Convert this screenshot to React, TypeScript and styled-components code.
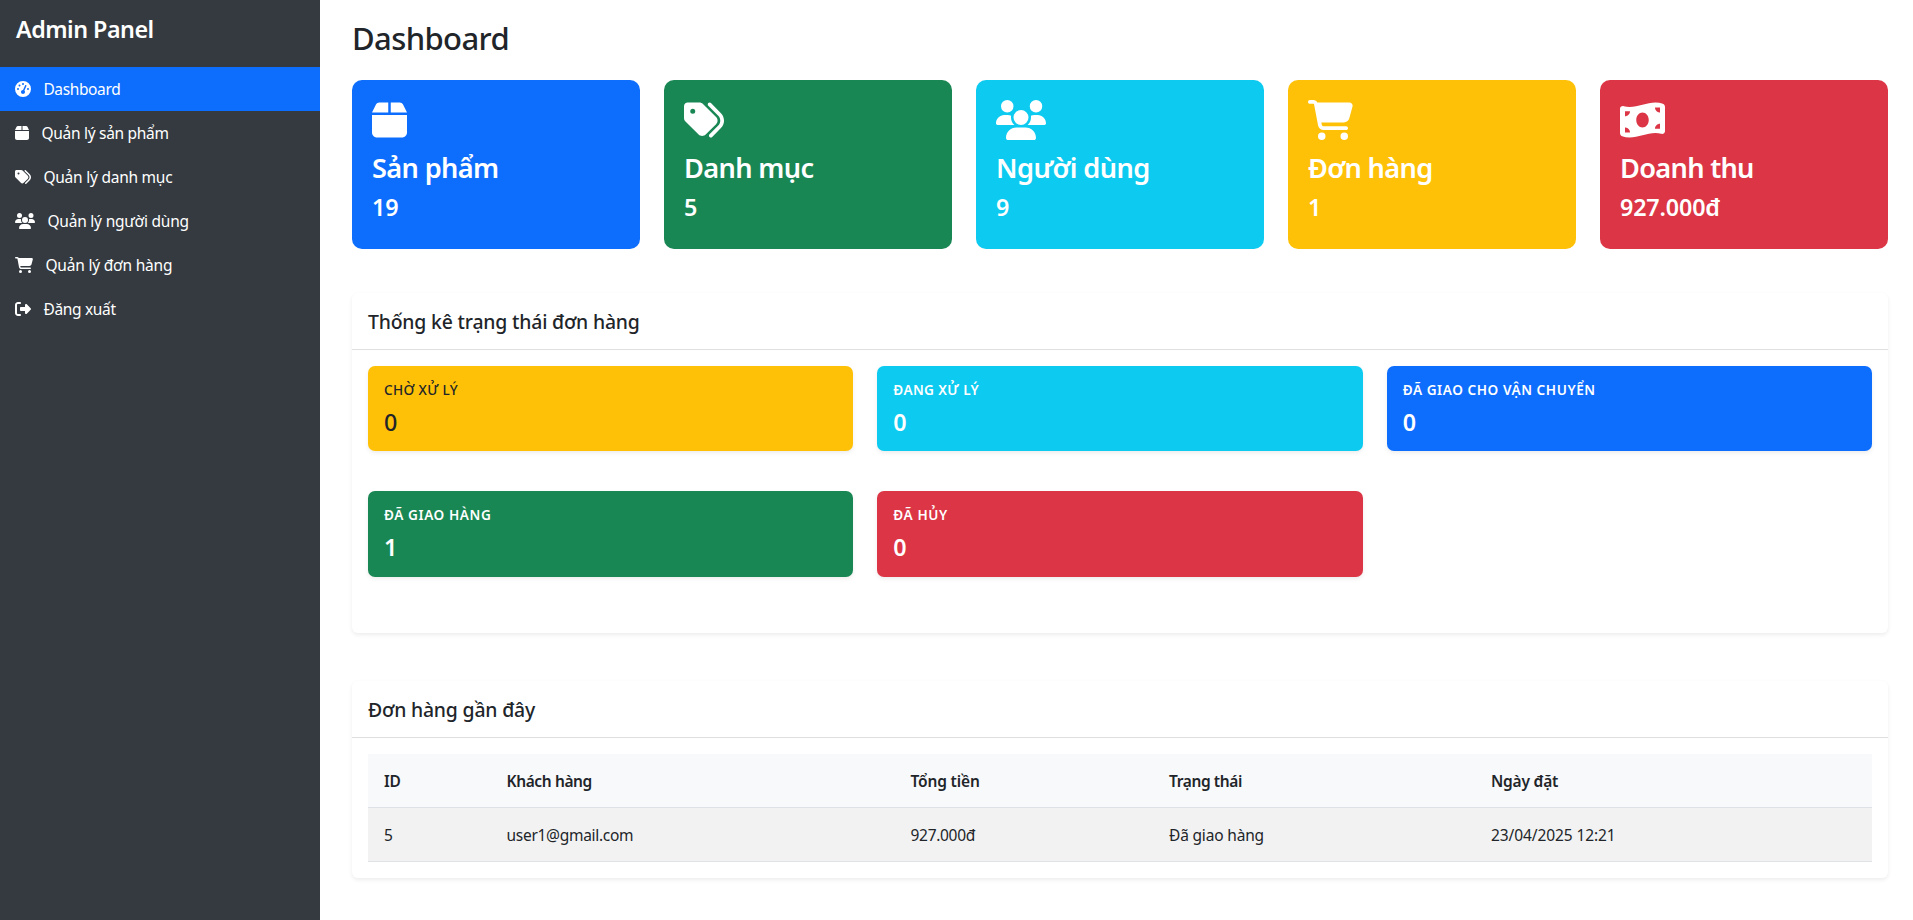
import React from 'react';
import styled, { createGlobalStyle } from 'styled-components';
import {
  FaBox,
  FaCartShopping,
  FaGaugeHigh,
  FaMoneyBillWave,
  FaRightFromBracket,
  FaTags,
  FaUsers,
} from 'react-icons/fa6';
import type { IconType } from 'react-icons';

const colors = {
  primary: '#0d6efd',
  success: '#198754',
  info: '#0dcaf0',
  warning: '#ffc107',
  danger: '#dc3545',
  dark: '#343a40',
  text: '#212529',
};

const GlobalStyle = createGlobalStyle`
  * { box-sizing: border-box; }
  body {
    margin: 0;
    background: #fff;
    color: ${colors.text};
    font-family: 'Segoe UI', 'Noto Sans', 'Open Sans', sans-serif;
    font-size: 15.5px;
    line-height: 24px;
  }
  h1, h2, h3, h4, p { margin: 0; }
`;

type Tracked = { $track?: number };

const Layout = styled.div`
  display: flex;
  min-height: 100vh;
`;

const Sidebar = styled.aside`
  flex: 0 0 320px;
  background: ${colors.dark};
  color: #fff;
`;

const Brand = styled.h2`
  height: 67px;
  padding: 15px 16px 0;
  font-size: 23.3px;
  font-weight: 600;
  line-height: 28px;
  letter-spacing: -0.5px;
`;

/* Glyphs share one height; their width follows the em ratio of the drawing. */
const Glyph = styled.span<{ $size: number; $ratio: number }>`
  display: block;
  flex: none;
  width: ${({ $size, $ratio }) => $size * $ratio}px;
  height: ${({ $size }) => $size}px;

  svg {
    display: block;
    width: 100%;
    height: 100%;
  }
`;

const NavLink = styled.a<{ $active?: boolean }>`
  display: flex;
  align-items: center;
  gap: 12.4px;
  height: 44px;
  padding: 0 15px;
  color: #fff;
  text-decoration: none;
  background: ${({ $active }) => ($active ? colors.primary : 'transparent')};
`;

const NavLabel = styled.span<Tracked>`
  letter-spacing: ${({ $track = 0 }) => $track}px;
`;

const Main = styled.main`
  flex: 1;
  padding: 19px 25px 0 32px;
`;

const PageTitle = styled.h1`
  margin-bottom: 23px;
  font-size: 31px;
  font-weight: 500;
  line-height: 38px;
  letter-spacing: -0.6px;
`;

const CardRow = styled.section`
  display: grid;
  grid-template-columns: repeat(5, 1fr);
  gap: 24px;
  margin-bottom: 44px;
`;

const StatCard = styled.article<{ $color: string }>`
  height: 169px;
  padding: 20px;
  border-radius: 10px;
  background: ${({ $color }) => $color};
  color: #fff;
`;

const StatTitle = styled.h3<Tracked>`
  margin: 11px 0 8px;
  font-size: 27.2px;
  font-weight: 600;
  line-height: 34px;
  letter-spacing: ${({ $track = 0 }) => $track}px;
`;

const StatValue = styled.p`
  font-size: 23.3px;
  font-weight: 600;
  line-height: 28px;
  letter-spacing: -0.15px;
`;

const Panel = styled.section`
  border-radius: 6px;
  background: #fff;
  box-shadow: 0 2px 4px rgba(0, 0, 0, 0.075);

  & + & {
    margin-top: 48px;
  }
`;

const PanelHeader = styled.header`
  height: 57px;
  padding: 17px 16px 15px;
  border-bottom: 1px solid #dfdfdf;
`;

const PanelTitle = styled.h4<Tracked>`
  font-size: 19.4px;
  font-weight: 550;
  line-height: 24px;
  letter-spacing: ${({ $track = 0 }) => $track}px;
`;

const PanelBody = styled.div`
  padding: 16px;
`;

const StatusGrid = styled.div`
  display: grid;
  grid-template-columns: repeat(3, 1fr);
  gap: 40px 24px;
  padding-bottom: 40px;
`;

const StatusTile = styled.article<{ $color: string; $dark?: boolean }>`
  height: 85.4px;
  padding: 16px;
  border-radius: 7px;
  background: ${({ $color }) => $color};
  color: ${({ $dark }) => ($dark ? colors.text : '#fff')};
  font-weight: ${({ $dark }) => ($dark ? 500 : 600)};
  box-shadow: 0 2px 4px rgba(0, 0, 0, 0.075);
`;

const StatusLabel = styled.p<Tracked>`
  margin-bottom: 9px;
  font-size: 13.6px;
  line-height: 16.8px;
  text-transform: uppercase;
  letter-spacing: ${({ $track = 0 }) => $track}px;
`;

const StatusValue = styled.p`
  font-size: 23.3px;
  line-height: 28.8px;
`;

const Table = styled.table`
  width: 100%;
  table-layout: fixed;
  border-collapse: separate;
  border-spacing: 0;
`;

const Column = styled.col<{ $width: number }>`
  width: ${({ $width }) => $width}px;
`;

const HeadCell = styled.th<Tracked>`
  height: 54px;
  padding: 2px 16px 0;
  border-bottom: 1px solid #dee2e6;
  background: #f8f9fb;
  font-weight: 600;
  text-align: left;
  letter-spacing: ${({ $track = 0 }) => $track}px;
`;

const Cell = styled.td<Tracked>`
  height: 54px;
  padding: 2px 16px 0;
  border-bottom: 1px solid #dee2e6;
  background: #f2f2f2;
  letter-spacing: ${({ $track = 0 }) => $track}px;
`;

type Symbol = { icon: IconType; ratio: number };

const symbols: Record<string, Symbol> = {
  gauge: { icon: FaGaugeHigh, ratio: 1 },
  box: { icon: FaBox, ratio: 0.875 },
  tags: { icon: FaTags, ratio: 1 },
  users: { icon: FaUsers, ratio: 1.25 },
  cart: { icon: FaCartShopping, ratio: 1.125 },
  money: { icon: FaMoneyBillWave, ratio: 1.125 },
  exit: { icon: FaRightFromBracket, ratio: 1 },
};

function SymbolIcon({ name, size }: { name: string; size: number }) {
  const { icon: Icon, ratio } = symbols[name];
  return (
    <Glyph $size={size} $ratio={ratio}>
      <Icon />
    </Glyph>
  );
}

const navItems: { icon: string; label: string; track: number; active?: boolean }[] = [
  { icon: 'gauge', label: 'Dashboard', track: -0.37, active: true },
  { icon: 'box', label: 'Quản lý sản phẩm', track: -0.29 },
  { icon: 'tags', label: 'Quản lý danh mục', track: -0.24 },
  { icon: 'users', label: 'Quản lý người dùng', track: -0.21 },
  { icon: 'cart', label: 'Quản lý đơn hàng', track: -0.2 },
  { icon: 'exit', label: 'Đăng xuất', track: -0.33 },
];

const stats = [
  { icon: 'box', title: 'Sản phẩm', value: '19', color: colors.primary, track: -0.65 },
  { icon: 'tags', title: 'Danh mục', value: '5', color: colors.success, track: -0.65 },
  { icon: 'users', title: 'Người dùng', value: '9', color: colors.info, track: -0.6 },
  { icon: 'cart', title: 'Đơn hàng', value: '1', color: colors.warning, track: -0.65 },
  { icon: 'money', title: 'Doanh thu', value: '927.000đ', color: colors.danger, track: -0.7 },
];

const statuses = [
  { label: 'Chờ xử lý', value: 0, color: colors.warning, track: 0.35, dark: true },
  { label: 'Đang xử lý', value: 0, color: colors.info, track: 0.39 },
  { label: 'Đã giao cho vận chuyển', value: 0, color: colors.primary, track: 0.56 },
  { label: 'Đã giao hàng', value: 1, color: colors.success, track: 0.58 },
  { label: 'Đã hủy', value: 0, color: colors.danger, track: 0.6 },
];

const columns = [
  { label: 'ID', width: 122.5, track: -0.2 },
  { label: 'Khách hàng', width: 404, track: -0.38 },
  { label: 'Tổng tiền', width: 258.5, track: -0.16 },
  { label: 'Trạng thái', width: 322, track: -0.38 },
  { label: 'Ngày đặt', width: 397, track: -0.2 },
];

const orders = [
  [
    { text: '5', track: 0 },
    { text: 'user1@gmail.com', track: -0.29 },
    { text: '927.000đ', track: -0.3 },
    { text: 'Đã giao hàng', track: -0.18 },
    { text: '23/04/2025 12:21', track: -0.1 },
  ],
];

export default function App() {
  return (
    <>
      <GlobalStyle />
      <Layout>
        <Sidebar>
          <Brand>Admin Panel</Brand>
          <nav>
            {navItems.map(({ icon, label, track, active }) => (
              <NavLink key={label} href="#" $active={active}>
                <SymbolIcon name={icon} size={16} />
                <NavLabel $track={track}>{label}</NavLabel>
              </NavLink>
            ))}
          </nav>
        </Sidebar>
        <Main>
          <PageTitle>Dashboard</PageTitle>
          <CardRow>
            {stats.map(({ icon, title, value, color, track }) => (
              <StatCard key={title} $color={color}>
                <SymbolIcon name={icon} size={40} />
                <StatTitle $track={track}>{title}</StatTitle>
                <StatValue>{value}</StatValue>
              </StatCard>
            ))}
          </CardRow>
          <Panel>
            <PanelHeader>
              <PanelTitle $track={-0.18}>Thống kê trạng thái đơn hàng</PanelTitle>
            </PanelHeader>
            <PanelBody>
              <StatusGrid>
                {statuses.map(({ label, value, color, track, dark }) => (
                  <StatusTile key={label} $color={color} $dark={dark}>
                    <StatusLabel $track={track}>{label}</StatusLabel>
                    <StatusValue>{value}</StatusValue>
                  </StatusTile>
                ))}
              </StatusGrid>
            </PanelBody>
          </Panel>
          <Panel>
            <PanelHeader>
              <PanelTitle $track={-0.18}>Đơn hàng gần đây</PanelTitle>
            </PanelHeader>
            <PanelBody>
              <Table>
                <colgroup>
                  {columns.map(({ label, width }) => (
                    <Column key={label} $width={width} />
                  ))}
                </colgroup>
                <thead>
                  <tr>
                    {columns.map(({ label, track }) => (
                      <HeadCell key={label} $track={track}>{label}</HeadCell>
                    ))}
                  </tr>
                </thead>
                <tbody>
                  {orders.map((cells) => (
                    <tr key={cells[0].text}>
                      {cells.map(({ text, track }) => (
                        <Cell key={text} $track={track}>{text}</Cell>
                      ))}
                    </tr>
                  ))}
                </tbody>
              </Table>
            </PanelBody>
          </Panel>
        </Main>
      </Layout>
    </>
  );
}
